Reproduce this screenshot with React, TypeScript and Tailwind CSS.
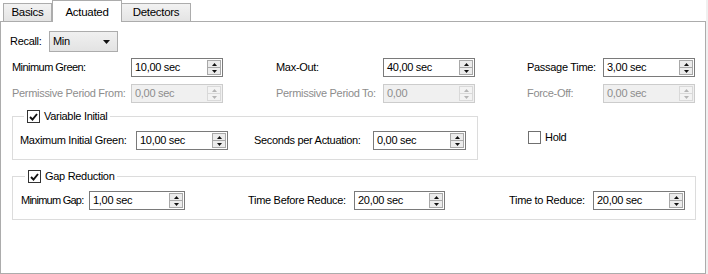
import type { ReactNode } from "react";

// ---------------------------------------------------------------------------
// Small WinForms-like controls
// ---------------------------------------------------------------------------

function Tri({ up, disabled }: { up?: boolean; disabled?: boolean }) {
  return (
    <svg width="5" height="3" viewBox="0 0 5 3">
      <path
        d={up ? "M0 3h5L2.5 0z" : "M0 0h5L2.5 3z"}
        fill={disabled ? "#b5b5b5" : "#111"}
      />
    </svg>
  );
}

function Spin({ disabled }: { disabled?: boolean }) {
  return (
    <div
      className={`ml-auto mr-[1px] flex h-[15px] w-[14px] flex-col border ${
        disabled ? "border-[#d9d9d9] bg-[#f3f3f3]" : "border-[#a8a8a8] bg-[#ececec]"
      }`}
    >
      <div
        className={`flex flex-1 items-center justify-center border-b ${
          disabled ? "border-[#d9d9d9]" : "border-[#a8a8a8]"
        }`}
      >
        <Tri up disabled={disabled} />
      </div>
      <div className="flex flex-1 items-center justify-center">
        <Tri disabled={disabled} />
      </div>
    </div>
  );
}

function NumBox({
  value,
  className,
  disabled,
}: {
  value: string;
  className: string;
  disabled?: boolean;
}) {
  return (
    <div
      className={`flex h-[19px] shrink-0 items-center border pl-[3px] ${className} ${
        disabled
          ? "border-[#cccccc] bg-[#f0f0f0] text-[#8d8d8d]"
          : "border-[#7a7a7a] bg-white text-black"
      }`}
    >
      <span>{value}</span>
      <Spin disabled={disabled} />
    </div>
  );
}

function Check({ checked }: { checked?: boolean }) {
  return (
    <span
      className={`flex h-[13px] w-[13px] shrink-0 items-center justify-center border bg-white ${
        checked ? "border-[#333333]" : "border-[#707070]"
      }`}
    >
      {checked && (
        <svg width="9" height="8" viewBox="0 0 9 8">
          <path d="M1 4l2.5 2.5L8 1" fill="none" stroke="#111" strokeWidth="1.9" />
        </svg>
      )}
    </span>
  );
}

function Label({ children, className, disabled }: { children: ReactNode; className: string; disabled?: boolean }) {
  return (
    <span className={`shrink-0 whitespace-nowrap ${className} ${disabled ? "text-[#8d8d8d]" : "text-black"}`}>
      {children}
    </span>
  );
}

function Group({
  title,
  className,
  children,
}: {
  title: string;
  className: string;
  children: ReactNode;
}) {
  return (
    <fieldset className={`border border-[#dcdcdc] pb-[9px] ${className}`}>
      <legend className="ml-[4px] flex h-[13px] items-center gap-[4px] px-[3px]">
        <Check checked />
        <span>{title}</span>
      </legend>
      <div className="mt-[8px] flex h-[19px] items-center">{children}</div>
    </fieldset>
  );
}

// ---------------------------------------------------------------------------
// Page
// ---------------------------------------------------------------------------

export default function App() {
  return (
    <div className="flex h-[274px] w-[708px] bg-white font-['Liberation_Sans',Arial,sans-serif] text-[11px] tracking-[-0.3px] text-black">
      <div className="flex w-[706px] flex-col">
        {/* Tabs */}
        <div className="flex h-[21px] items-end pl-[3px] text-[11.5px]">
          <div className="flex h-[18px] w-[49px] items-center justify-center border border-b-0 border-[#acacac] bg-gradient-to-b from-[#f2f2f2] to-[#e4e4e4]">
            Basics
          </div>
          <div className="relative z-10 -mb-px flex h-[22px] w-[70px] items-start justify-center border border-b-0 border-[#acacac] bg-white pt-[3px]">
            Actuated
          </div>
          <div className="flex h-[18px] w-[69px] items-center justify-center border border-b-0 border-l-0 border-[#acacac] bg-gradient-to-b from-[#f2f2f2] to-[#e4e4e4]">
            Detectors
          </div>
        </div>

        {/* Panel */}
        <div className="flex h-[253px] w-[706px] flex-col border border-[#acacac]">
          {/* Recall */}
          <div className="mt-[9px] flex h-[21px] items-center pl-[9px]">
            <Label className="w-[39px]">Recall:</Label>
            <div className="flex h-[21px] w-[69px] items-center border border-[#acacac] bg-gradient-to-b from-[#f0f0f0] to-[#e3e3e3] pl-[3px]">
              <span>Min</span>
              <svg className="ml-auto mr-[7px]" width="7" height="4" viewBox="0 0 7 4">
                <path d="M0 0h7L3.5 4z" fill="#111" />
              </svg>
            </div>
          </div>

          {/* Row 1 */}
          <div className="mt-[6px] flex h-[19px] items-center pl-[11px]">
            <Label className="w-[119px] tracking-[-0.55px]">Minimum Green:</Label>
            <NumBox value="10,00 sec" className="w-[92px]" />
            <Label className="ml-[53px] w-[107px]">Max-Out:</Label>
            <NumBox value="40,00 sec" className="w-[92px]" />
            <Label className="ml-[52px] w-[76px]">Passage Time:</Label>
            <NumBox value="3,00 sec" className="w-[92px]" />
          </div>

          {/* Row 2 (disabled) */}
          <div className="mt-[7px] flex h-[19px] items-center pl-[11px]">
            <Label disabled className="w-[119px]">Permissive Period From:</Label>
            <NumBox disabled value="0,00 sec" className="w-[92px]" />
            <Label disabled className="ml-[53px] w-[107px]">Permissive Period To:</Label>
            <NumBox disabled value="0,00" className="w-[92px]" />
            <Label disabled className="ml-[52px] w-[76px]">Force-Off:</Label>
            <NumBox disabled value="0,00 sec" className="w-[92px]" />
          </div>

          {/* Variable Initial + Hold */}
          <div className="mt-[7px] flex items-start pl-[11px]">
            <Group title="Variable Initial" className="w-[466px] pl-[7px]">
              <Label className="w-[116px]">Maximum Initial Green:</Label>
              <NumBox value="10,00 sec" className="w-[92px]" />
              <Label className="ml-[26px] w-[119px]">Seconds per Actuation:</Label>
              <NumBox value="0,00 sec" className="w-[93px]" />
            </Group>
            <div className="ml-[50px] mt-[19px] flex items-center gap-[4px]">
              <Check />
              <span>Hold</span>
            </div>
          </div>

          {/* Gap Reduction */}
          <div className="mt-[10px] flex pl-[11px]">
            <Group title="Gap Reduction" className="w-[684px] pl-[8px]">
              <Label className="w-[68px] tracking-[-0.75px]">Minimum Gap:</Label>
              <NumBox value="1,00 sec" className="w-[96px]" />
              <Label className="ml-[63px] w-[106px]">Time Before Reduce:</Label>
              <NumBox value="20,00 sec" className="w-[91px]" />
              <Label className="ml-[64px] w-[84px]">Time to Reduce:</Label>
              <NumBox value="20,00 sec" className="w-[92px]" />
            </Group>
          </div>
        </div>
      </div>
      <div className="w-[2px] bg-[#f0f0f0]" />
    </div>
  );
}
